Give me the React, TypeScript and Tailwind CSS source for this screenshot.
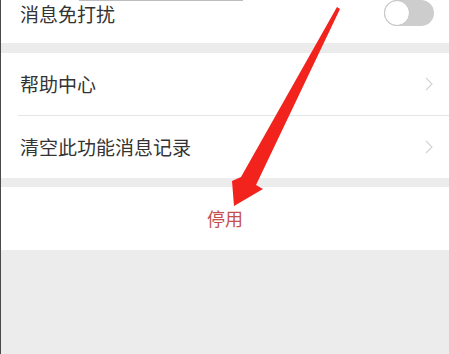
const font = { fontFamily: '"Noto Sans CJK SC", "Noto Sans", sans-serif' };

function Chevron() {
  return (
    <svg width="8" height="14" viewBox="0 0 8 14" className="shrink-0">
      <path d="M1 1 L7 7 L1 13" fill="none" stroke="#d2d2d2" strokeWidth="1.1" />
    </svg>
  );
}

function Row({ label }: { label: string }) {
  return (
    <div className="flex h-[62px] items-center justify-between pl-[19px] pr-[16px]">
      <span className="text-[19px] text-[#333333]">{label}</span>
      <Chevron />
    </div>
  );
}

export default function App() {
  return (
    <div
      className="relative w-[449px] h-[354px] overflow-hidden bg-[#ececec] border-l border-[#4a4a4a]"
      style={font}
    >
      {/* top hairline left over from the row above */}
      <div className="absolute left-[78px] top-0 h-px w-[164px] bg-[#bdbdbd]" />

      {/* 消息免打扰 (cut off at the top) */}
      <div className="flex h-[43px] items-start justify-between bg-white pl-[19px] pr-[15px]">
        <span className="flex h-[28px] items-center text-[19px] text-[#333333]">消息免打扰</span>
        <div className="relative h-[26px] w-[50px] rounded-full bg-[#cdcdcd]">
          <div className="absolute left-0 top-0 h-[26px] w-[26px] rounded-full border border-[#c4c4c4] bg-white" />
        </div>
      </div>

      <div className="h-[10px]" />

      <div className="bg-white">
        <Row label="帮助中心" />
        <div className="ml-[17px] h-px bg-[#e6e6e6]" />
        <Row label="清空此功能消息记录" />
      </div>

      <div className="h-[9px]" />

      <div className="flex h-[63px] items-center justify-center bg-white">
        <span className="text-[18px] text-[#c4504e]">停用</span>
      </div>

      {/* red annotation arrow */}
      <svg className="pointer-events-none absolute left-0 top-0" width="449" height="354">
        <polygon
          points="336,7 339,9 255,185 262,189 233,206 231,181 240,177"
          fill="#f2221c"
        />
      </svg>
    </div>
  );
}
